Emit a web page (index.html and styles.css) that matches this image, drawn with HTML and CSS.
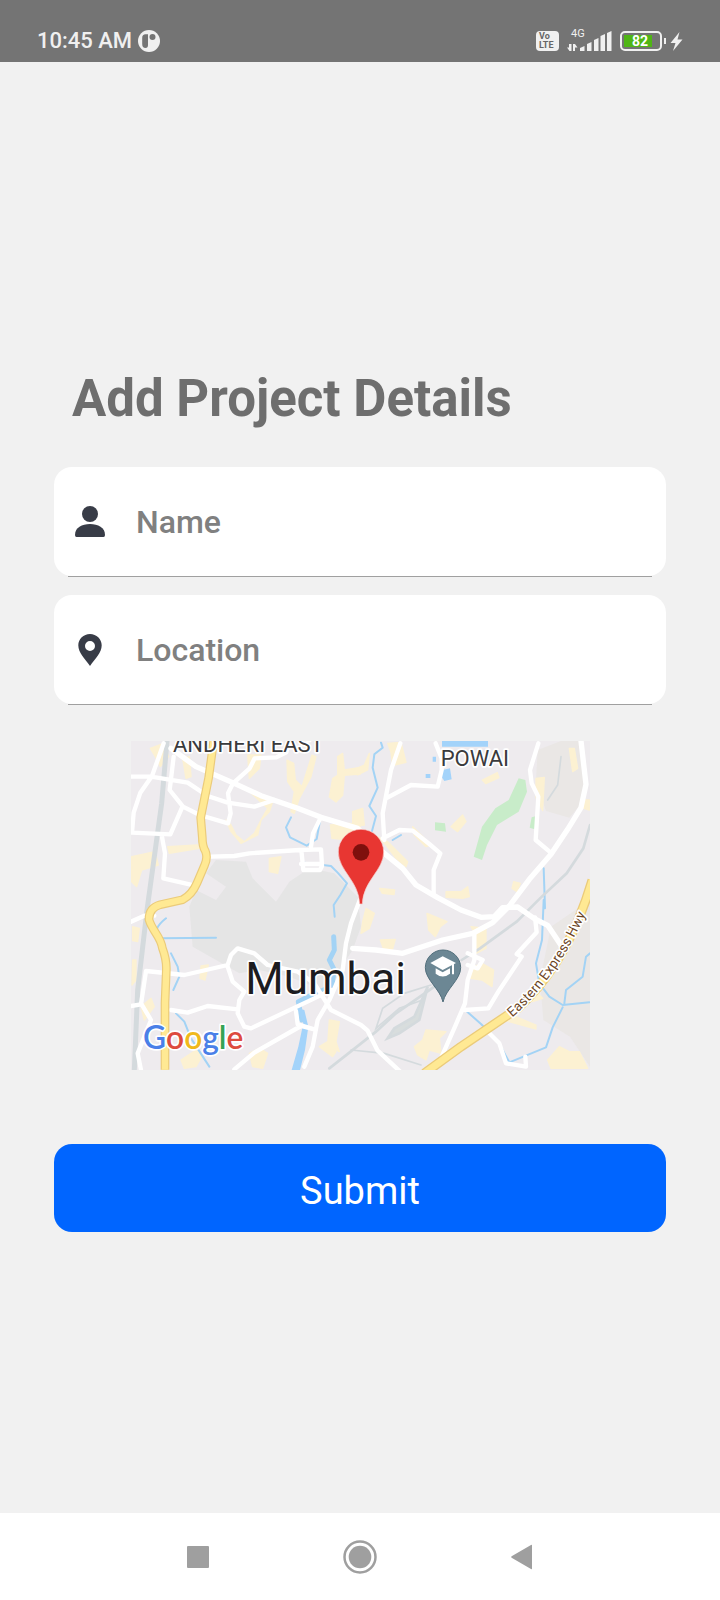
FILE: index.html
```html
<!DOCTYPE html>
<html lang="en">
<head>
<meta charset="utf-8">
<meta name="viewport" content="width=device-width, initial-scale=1">
<title>Add Project Details</title>
<link rel="stylesheet" href="styles.css">
</head>
<body>
<div class="screen">
  <header class="status">
    <div class="status-group">
      <span class="clock">10:45 AM</span>
      <svg class="app-mark" viewBox="0 0 22 22" aria-hidden="true">
        <circle cx="11" cy="11" r="11" fill="#f0f0f0"/>
        <path d="M10 4.300H7.500Q4.200 4.300 4.200 8v6q0 4 3.300 4 2.500 0 2.500-3z" fill="#747474"/>
        <circle cx="14.500" cy="7" r="3" fill="#747474"/>
      </svg>
    </div>
    <div class="status-group status-right">
      <span class="volte"><span>Vo</span><span>LTE</span></span>
      <span class="signal">
        <span class="network">4G</span>
        <svg class="bars" viewBox="0 0 45 21" aria-hidden="true" fill="#f0f0f0">
          <path d="M4.500 13v7H2.500L0 16.500h2V13zM6 20v-7h2l2.500 3.500H8V20z"/>
          <path d="M13 20v-3l4.500-2v5zM20 20v-7l4.500-2v9zM27 20V9l4.500-2v13zM33.500 20V5L38 3v17zM40 20V2l4.500-2v20z"/>
        </svg>
      </span>
      <span class="battery"><span class="level">82</span></span>
      <svg class="bolt" viewBox="0 0 12 19" aria-hidden="true"><path d="M9 0 0 11h5L2.500 19 12 7.500H7z" fill="#f0f0f0"/></svg>
    </div>
  </header>

  <main class="content">
    <h1 class="title">Add Project Details</h1>
    <form class="form">
      <div class="field">
        <label for="name" aria-label="Name">
          <svg class="field-icon" viewBox="0 0 32 36" fill="#383c47" aria-hidden="true"><circle cx="16" cy="10" r="8"/><path d="M1 31c0-7.500 7-11 15-11s15 3.500 15 11q0 2-1.500 2h-27Q1 33 1 31z"/></svg>
        </label>
        <input id="name" type="text" placeholder="Name">
      </div>
      <div class="field">
        <label for="location" aria-label="Location">
          <svg class="field-icon" viewBox="0 0 32 36" fill="#383c47" aria-hidden="true"><path fill-rule="evenodd" d="M16 2C9.500 2 4.300 7 4.300 13.300 4.300 21 11 27 16 34c5-7 11.700-13 11.700-20.700C27.700 7 22.500 2 16 2zm0 7a5 5 0 1 1 0 10 5 5 0 0 1 0-10z"/></svg>
        </label>
        <input id="location" type="text" placeholder="Location">
      </div>

      <svg class="map" viewBox="30 33 1377 987" role="img" aria-label="Map of Mumbai">
        <rect x="30" y="33" width="1377" height="987" fill="#eeebee"/>
        <!-- terrain -->
        <path fill="#e5e5e5" d="M285 390l90 5 20 50 70 70 40-60 60-40 75 15 70 70 10 90-25 70-40 60-50 60-100-40-90-20-60 10-140-80-10-120 20-50 60 30 30-40-60-40z"/>
        <path fill="#eae7e5" d="M1250 60l70-27h60l15 170-50 60-70-20-30-90zM1290 590l117-80v500l-60-90-80-50-10-120z"/>
        <path fill="#c8ecc9" d="M1058 380l25-90 40-55 40-25 30-65 20 5 5 35-25 60-65 40-30 60-15 45zM942 277l30 3 3 25-33-4zM1232 262l14-4-5 40-15-5z"/>
        <!-- built-up blocks -->
        <g fill="#fcf1d2" stroke="#fcf1d2" stroke-width="4" stroke-linejoin="round">
          <path d="M88 55l40-15 15 40-25 30-15-30zM185 85l20-5 5 60-15 5zM380 75l40 0-5 40-30 30zM498 90l20 10 5 50 20 20 30-95 12 5-15 60-35 65-15 45-10-5 10-60-20-30zM650 80l15-10 5 50 48-8v20l-48 4-5 60-20 20-20-15 10-55 15-10z"/>
          <path d="M380 180l35 10 40 25-10 30-25 25-10 45-50 25-30-35-15-35 15 15 15 30 25 20 30-25 20-40 20-35zM140 350l90-5 5 10-90 15zM32 380l70-15 10 40-50 15-15 50-15-15zM445 385l35-5-10 50-25-5zM628 285l60-5 30 10-30 40-55-5z"/>
          <path d="M800 40l40-3 15 60-40 10-5-40zM695 120l35-15 15-35-5 50-30 15zM695 245l30-10 5 50-35 5zM1084 150l45-22 5 15-40 18zM990 290l35-35 10 20-25 30zM770 320l30 15 60 60-5 15-30-25-30-40zM875 290l55 55-15 5-35-35zM776 475l45 5-2 14-35-4zM975 485l45 0 20-15 5 30-20 5-50-3zM1245 145l25-3-5 100-20-40zM1345 55l15 0 10 60-15 10zM1390 210l15 0v30l-17-5zM1178 455l20 5-10 25-15-10z"/>
          <path d="M35 590l20 5-5 40-15-3zM240 708l22-3-10 45-15-5zM35 690l10 0 0 60-12 15zM60 830l30-25 10 25-30 40zM180 990l45-30 20 15-20 35-35 5zM385 970l30-15 25 15-15 45-30-5zM625 870l30 5-10 60 10 30-35-20zM595 950l25-15 25 30-10 15z"/>
          <path d="M735 535l25 15-15 45-25 15 5-35zM918 550l60 25-20 15-15 30-20-20zM778 630l45-2-10 35-25-5zM1050 590l45 5 0 60-30 15 0-55zM1048 715l35-15 35 20-5 50-30-20-35-5zM880 950l25-20 10-30 60 5-20 20 5 45-35-10-10 30-25-15zM1160 850l85 35v12l-90-25zM1280 990l35-40 30 15 30 0 25 50-110 0zM1230 770l35 35-30 10z"/>
        </g>
        <!-- water -->
        <g fill="none" stroke="#a3d3f5" stroke-width="6" stroke-linecap="round" stroke-linejoin="round">
          <path d="M510 262l-15 30 12 30 50 25 30-20 10-55M550 398l80 10 20 20 28 32-20 35-20 30 3 35M780 38l5 15-25 20-5 40 15 60-25 55 20 30-12 45M135 565q-45 35-20 60l170-2M150 670l20 40 5 30-18 40M165 850l25 25 20 50 55 85M1268 415l4 120M1268 510l-5 120-18 70 10 60 30 40 40 25 80-8M1330 820l5-40 50-40 10-60 12-10M1325 832l-30 60-20 60-110 45-35-65-50-50-45-40M815 330l25-15"/>
          <path stroke-width="15" d="M638 620l2 40-15 30 15 30-8 50-70 30-30 15 10 55"/>
        </g>
        <path fill="#a3d3fa" d="M530 835l20 5 12 50-10 70-15 60h-25l20-70 15-70zM963 33h138v17H963zM965 120l22-5 5 33-22 5-10-15zM935 80h10v15h-10zM914 132h14v12h-14z"/>
        <!-- railways -->
        <g fill="none" stroke="#d4dadd" stroke-width="8" stroke-linecap="round">
          <path stroke-width="15" d="M138 33 122 220 78 540 50 780 40 1020"/>
          <path d="M1407 285l-20 70-50 75-80 75-70 70-110 80-55 35M1010 700l-70 70-115 80-60 55-140 110"/>
          <path stroke-width="5" d="M930 765l-80 25-65 45-20 60 70-60 70-25M690 960l100 10 110 35M1320 80l-10 85-30 45"/>
          <path fill="#d8dddd" d="M800 925l20-30 60-35 40-90-25 100-60 40z"/>
        </g>
        <!-- streets -->
        <g fill="none" stroke="#fff" stroke-width="13" stroke-linecap="round" stroke-linejoin="round">
          <path stroke-width="16" d="M150 55l75 55 115 50 80 37 110 38 70 27 110 33 80 75 55 45 40 50 65 38 70 37 60 22 40-2 25-27 45-2 50 35 40 20 40 60"/>
          <path stroke-width="16" d="M1380 33l8 70 7 60-15 70-40 65-50 75-65 75-60 80-50 50-60 32-90 20-120 40-80-10-70-5"/>
          <path d="M30 140l60 0 110 18 60 40 60 20 80 12 60-20M128 40l-35 98-35 50-20 60-5 60 115 5 35-80M158 80l-12 100 40 50 50 25 85 25 8-30-8-60 15-30 50-45 15-30 65-3 30-15 10-40M122 315l10 55-5 75 95 22"/>
          <path d="M270 380l70-2 45-8 150-10 65-2 3 50-6 12h-50l-6-60M540 402h60M570 350l6-40 22-45M838 40l-28 80-25 130 5 80M795 205l75-40 80 5 12-50 0-35-18-45M785 325l50-25 40 2 50 40 33 28-20 50 0 70"/>
          <path d="M1252 40l-25 80 5 40 20 40-8 130 48 40M30 575l40-18h30M30 828l30-5 15-100 115 12 130-30 10-30 20-20 50 15 40 35 90 20 50 35 50 80 90 45 20 17 30 60 70 65 60 30 60 15M320 710l15 45 35 30-15 25-5 40 20 40 20 5 190-90 50-25M150 840l50 8 60-20 90 10M720 500l-30 80-15 60-10 80-40 90-35 60-15 80-25 60M340 1018l60-50 140-80 40 10-50-15-5-40"/>
          <path d="M1060 610l0 80-20 60-8 70-30 70-40 90M1032 840l70-5 30-50 40-60 30-45-15-8 60-65-5-45M1040 670l45 20-15 25-30-10M1105 910l30 30 20 60 60 10-2-30M60 820l30 50-40 100 10 50"/>
        </g>
        <!-- highways -->
        <g fill="none" stroke-linejoin="round">
          <path stroke="#ebcb7a" stroke-width="26" d="M278 33l-15 110-24 120 5 60q0 25 9 40 8 20-2 42l-23 54q-15 35-43 50l-67 15q-35 10-34 45c10 35 35 50 40 85q13 35 12 65l-4 100v200"/>
          <path stroke="#ffe993" stroke-width="19" d="M278 33l-15 110-24 120 5 60q0 25 9 40 8 20-2 42l-23 54q-15 35-43 50l-67 15q-35 10-34 45c10 35 35 50 40 85q13 35 12 65l-4 100v200"/>
          <path stroke="#ebcb7a" stroke-width="29" d="M910 1030l110-80 170-115Q1340 700 1414 450"/>
          <path stroke="#ffe993" stroke-width="21" d="M910 1030l110-80 170-115Q1340 700 1414 450"/>
          <path id="hwy-label" d="M1174 862Q1310 745 1404 530"/>
        </g>
        <!-- labels -->
        <g class="map-label">
          <text x="156" y="66" font-size="66">ANDHERI EAST</text>
          <text x="959" y="107" font-size="66">POWAI</text>
          <text class="city" x="373" y="791" font-size="132">Mumbai</text>
          <text class="road" font-size="41"><textPath href="#hwy-label">Eastern Express Hwy</textPath></text>
          <text class="google" x="66" y="958" font-size="95"><tspan fill="#4a80e8">G</tspan><tspan fill="#dd4b3e">o</tspan><tspan fill="#f0b91c">o</tspan><tspan fill="#4a80e8">g</tspan><tspan fill="#35a354">l</tspan><tspan fill="#dd4b3e">e</tspan></text>
        </g>
        <!-- college marker -->
        <path fill="#6c8794" stroke="#526f7c" stroke-width="3" d="M966 816c-8-38-53-67-53-103a53 53 0 0 1 106 0c0 36-45 65-53 103z"/>
        <path fill="#fff" d="M928 699l37-20 40 20-40 21zM944 715l21 12 22-12v16q-22 17-43 0zM993 703h6v30h-6z"/>
        <!-- selected place -->
        <path fill="#e83632" stroke="#f7cfcc" stroke-width="2" d="M716 522c-2-70-64-100-64-156a68 68 0 0 1 136 0c0 56-62 86-64 156z"/>
        <circle cx="720" cy="367" r="25" fill="#7f100d"/>
      </svg>

      <button class="submit" type="submit">Submit</button>
    </form>
  </main>

  <nav class="navbar" aria-label="System navigation">
    <button type="button" aria-label="Recent apps"><svg viewBox="0 0 34 34"><rect x="6" y="6" width="22" height="22" rx="1" fill="#9f9f9f"/></svg></button>
    <button type="button" aria-label="Home"><svg viewBox="0 0 34 34"><circle cx="17" cy="17" r="15.500" fill="none" stroke="#9f9f9f" stroke-width="2.500"/><circle cx="17" cy="17" r="11.300" fill="#9f9f9f"/></svg></button>
    <button type="button" aria-label="Back"><svg viewBox="0 0 34 34"><path d="M27 5.500v23q0 1-1 .4L6.600 17.800q-1-.8 0-1.600L26 5q1-.5 1 .5z" fill="#9f9f9f"/></svg></button>
  </nav>
</div>
</body>
</html>
```

FILE: styles.css
```css
* {
  box-sizing: border-box;
}

body {
  margin: 0;
  background: #f1f1f1;
  font-family: Roboto, "Liberation Sans", sans-serif;
}

button,
input {
  font-family: inherit;
}

.screen {
  display: flex;
  flex-direction: column;
  min-height: 100vh;
}

.status {
  display: flex;
  justify-content: space-between;
  align-items: flex-start;
  padding: 28px 37px 8px;
  background: #747474;
  color: #f0f0f0;
}

.status-group {
  display: flex;
  align-items: center;
  gap: 6px;
  height: 26px;
}

.status-right {
  gap: 8px;
}

.clock {
  font-size: 22px;
  font-weight: 500;
  line-height: 26px;
}

.app-mark {
  width: 22px;
  height: 22px;
}

.volte {
  display: flex;
  flex-direction: column;
  width: 23px;
  height: 20px;
  padding: 1px 3px;
  border-radius: 4px;
  background: #f0f0f0;
  color: #666;
  font-size: 9px;
  font-weight: 700;
  line-height: 9px;
}

.signal {
  position: relative;
  display: flex;
  width: 45px;
}

.network {
  position: absolute;
  top: -3px;
  left: 4px;
  font-size: 11px;
  line-height: 12px;
}

.bars {
  width: 45px;
  height: 21px;
}

.battery {
  position: relative;
  width: 42px;
  height: 20px;
  padding: 2px;
  border: 2px solid #f0f0f0;
  border-radius: 5px;
}

.battery::after {
  content: "";
  position: absolute;
  top: 5px;
  right: -6px;
  width: 2px;
  height: 6px;
  background: #f0f0f0;
}

.level {
  display: block;
  width: 28px;
  height: 12px;
  padding-left: 8px;
  background: #4fb515;
  color: #fff;
  font-size: 14px;
  font-weight: 700;
  line-height: 13px;
}

.bolt {
  width: 13px;
  height: 19px;
}

.content {
  flex: 1;
  padding: 307px 54px 60px;
}

.title {
  margin: 0 18px 38px;
  color: #6e6e6e;
  font-size: 51px;
  font-weight: 700;
  line-height: 60px;
}

.form {
  display: flex;
  flex-direction: column;
}

.field {
  position: relative;
  display: flex;
  align-items: center;
  height: 109px;
  margin-bottom: 19px;
  padding: 0 20px;
  border-radius: 18px;
  background: #fff;
}

.field::after {
  content: "";
  position: absolute;
  right: 14px;
  bottom: -1px;
  left: 14px;
  height: 1px;
  background: #a0a0a0;
}

.field label {
  display: flex;
}

.field-icon {
  width: 32px;
  height: 36px;
}

.field input {
  flex: 1;
  min-width: 0;
  margin-left: 30px;
  padding: 0;
  border: 0;
  outline: 0;
  background: transparent;
  color: #383c47;
  font-size: 32px;
  font-weight: 500;
  line-height: 40px;
}

.field input::placeholder {
  color: #808080;
  opacity: 1;
}

.map {
  display: block;
  width: 75%;
  margin: 18px auto 74px;
}

.map-label {
  fill: #3a3a3c;
  stroke: #fff;
  stroke-width: 10px;
  stroke-linejoin: round;
  paint-order: stroke;
}

.city {
  fill: #1c1c1f;
}

.road {
  fill: #6b441e;
}

.google {
  font-family: Lato, sans-serif;
  font-weight: 600;
}

.submit {
  height: 88px;
  padding: 6px 0 0;
  border: 0;
  border-radius: 18px;
  background: #0065ff;
  color: #fff;
  font-size: 38px;
  line-height: 44px;
}

.navbar {
  display: flex;
  justify-content: center;
  align-items: center;
  gap: 128px;
  height: 87px;
  background: #fff;
}

.navbar button {
  display: flex;
  width: 34px;
  height: 34px;
  padding: 0;
  border: 0;
  background: none;
}

.navbar svg {
  width: 34px;
  height: 34px;
}
```
